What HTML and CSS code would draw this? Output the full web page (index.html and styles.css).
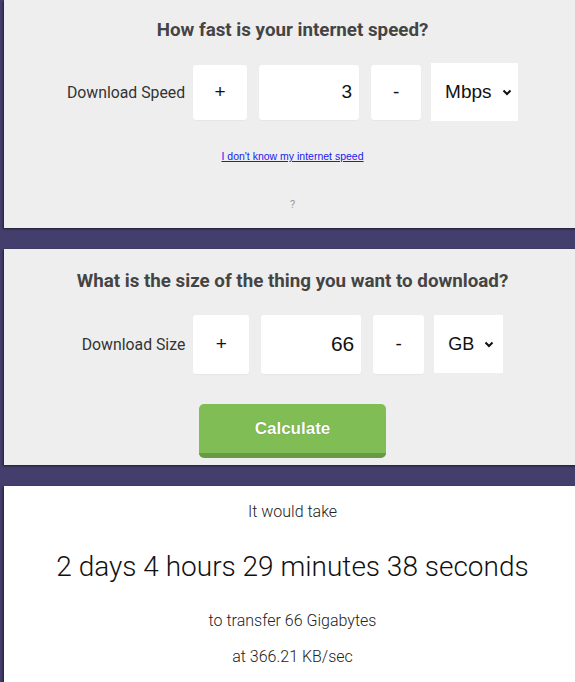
FILE: index.html
```html
<!DOCTYPE html>
<html>
<head>
<meta charset="utf-8">
<link rel="stylesheet" href="styles.css">
</head>
<body>
<div class="page">
  <section class="card card-speed">
    <h2 class="title">How fast is your internet speed?</h2>
    <div class="row row-speed">
      <span class="label">Download Speed</span>
      <div class="box pm">+</div>
      <div class="box num">3</div>
      <div class="box pm minus">-</div>
      <div class="select sel-speed"><span>Mbps</span><svg class="chev" width="10" height="7" viewBox="0 0 10 7"><path d="M1.5 1.5 L5 5 L8.5 1.5" fill="none" stroke="#111" stroke-width="2"/></svg></div>
    </div>
    <a class="link" href="#">I don't know my internet speed</a>
    <div class="q">?</div>
  </section>

  <section class="card card-size">
    <h2 class="title">What is the size of the thing you want to download?</h2>
    <div class="row row-size">
      <span class="label">Download Size</span>
      <div class="box pm">+</div>
      <div class="box num">66</div>
      <div class="box pm minus">-</div>
      <div class="select sel-size"><span>GB</span><svg class="chev" width="10" height="7" viewBox="0 0 10 7"><path d="M1.5 1.5 L5 5 L8.5 1.5" fill="none" stroke="#111" stroke-width="2"/></svg></div>
    </div>
    <button class="calc">Calculate</button>
  </section>

  <section class="card card-result">
    <p class="small">It would take</p>
    <p class="big">2 days 4 hours 29 minutes 38 seconds</p>
    <p class="small transfer">to transfer 66 Gigabytes</p>
    <p class="small rate">at 366.21 KB/sec</p>
  </section>
</div>
</body>
</html>
```

FILE: styles.css
```css
html, body {
  margin: 0;
  padding: 0;
  overflow: hidden;
  background: #433e6b;
  height: 682px;
}
body {
  font-family: Roboto, "Liberation Sans", sans-serif;
  color: #333;
}
.page {
  padding-left: 4px;
  width: 577px;
}
.card {
  background: #eeeeee;
  box-shadow: -1px 1px 2px rgba(0, 0, 0, 0.55);
  display: flex;
  flex-direction: column;
  align-items: center;
}
.card-speed {
  padding: 19px 0 16px;
}
.card-size {
  margin-top: 21px;
  padding: 21px 0 7px;
}
.card-result {
  margin-top: 21px;
  background: #ffffff;
  padding: 16px 0 40px;
}
.title {
  margin: 0;
  font-size: 18.75px;
  line-height: 22px;
  font-weight: 700;
  color: #444;
}
.row {
  display: flex;
  align-items: center;
}
.row-speed {
  margin-top: 22px;
  height: 58px;
}
.row-size {
  margin-top: 22px;
  height: 60px;
}
.label {
  font-size: 15.8px;
  font-weight: 400;
  color: #333;
  margin-right: 8px;
}
.box {
  background: #fff;
  border-radius: 3px;
  box-shadow: 0 1px 1px rgba(0, 0, 0, 0.04);
  display: flex;
  align-items: center;
  justify-content: center;
  font-family: "Liberation Sans", Arial, sans-serif;
  color: #111;
}
.row-speed .box { height: 55px; }
.row-size .box { height: 59px; }
.pm { font-size: 19px; }
.row-speed .pm { width: 54px; }
.row-speed .minus { width: 50px; margin-left: 12px; }
.row-size .pm { width: 56px; }
.row-size .minus { width: 51px; margin-left: 12px; }
.num {
  justify-content: flex-end;
  padding-right: 7px;
  box-sizing: border-box;
  margin-left: 12px;
}
.row-speed .num { width: 100px; font-size: 19px; }
.row-size .num { width: 100px; font-size: 21px; }
.select {
  background: #fff;
  height: 58px;
  display: flex;
  align-items: center;
  font-family: "Liberation Sans", Arial, sans-serif;
  font-size: 19px;
  color: #111;
  margin-left: 10px;
  box-sizing: border-box;
}
.sel-speed { width: 87px; padding-left: 14px; }
.sel-speed .chev { margin-left: 10px; }
.sel-size { width: 69px; padding-left: 14px; font-size: 18px; }
.sel-size .chev { margin-left: 10px; }
.link {
  margin-top: 28px;
  font-family: "Liberation Sans", Arial, sans-serif;
  font-size: 10.5px;
  line-height: 14px;
  color: #1a1aee;
  text-decoration: underline;
}
.q {
  margin-top: 35px;
  font-size: 11px;
  line-height: 14px;
  color: #999;
}
.calc {
  margin-top: 30px;
  width: 187px;
  height: 54px;
  border: none;
  border-bottom: 5px solid #6a9945;
  border-radius: 5px;
  background: #80bd55;
  color: #fff;
  font-family: "Liberation Sans", Arial, sans-serif;
  font-weight: 700;
  font-size: 17px;
  text-shadow: 0 0 1px rgba(0, 0, 0, 0.35);
  padding: 0;
}
.card-result p {
  margin: 0;
}
.small {
  font-size: 16px;
  font-weight: 300;
  line-height: 20px;
  color: #222;
}
.big {
  margin-top: 28px !important;
  font-size: 28px;
  font-weight: 300;
  line-height: 34px;
  color: #111;
}
.transfer { margin-top: 27px !important; }
.rate { margin-top: 16px !important; }
```
